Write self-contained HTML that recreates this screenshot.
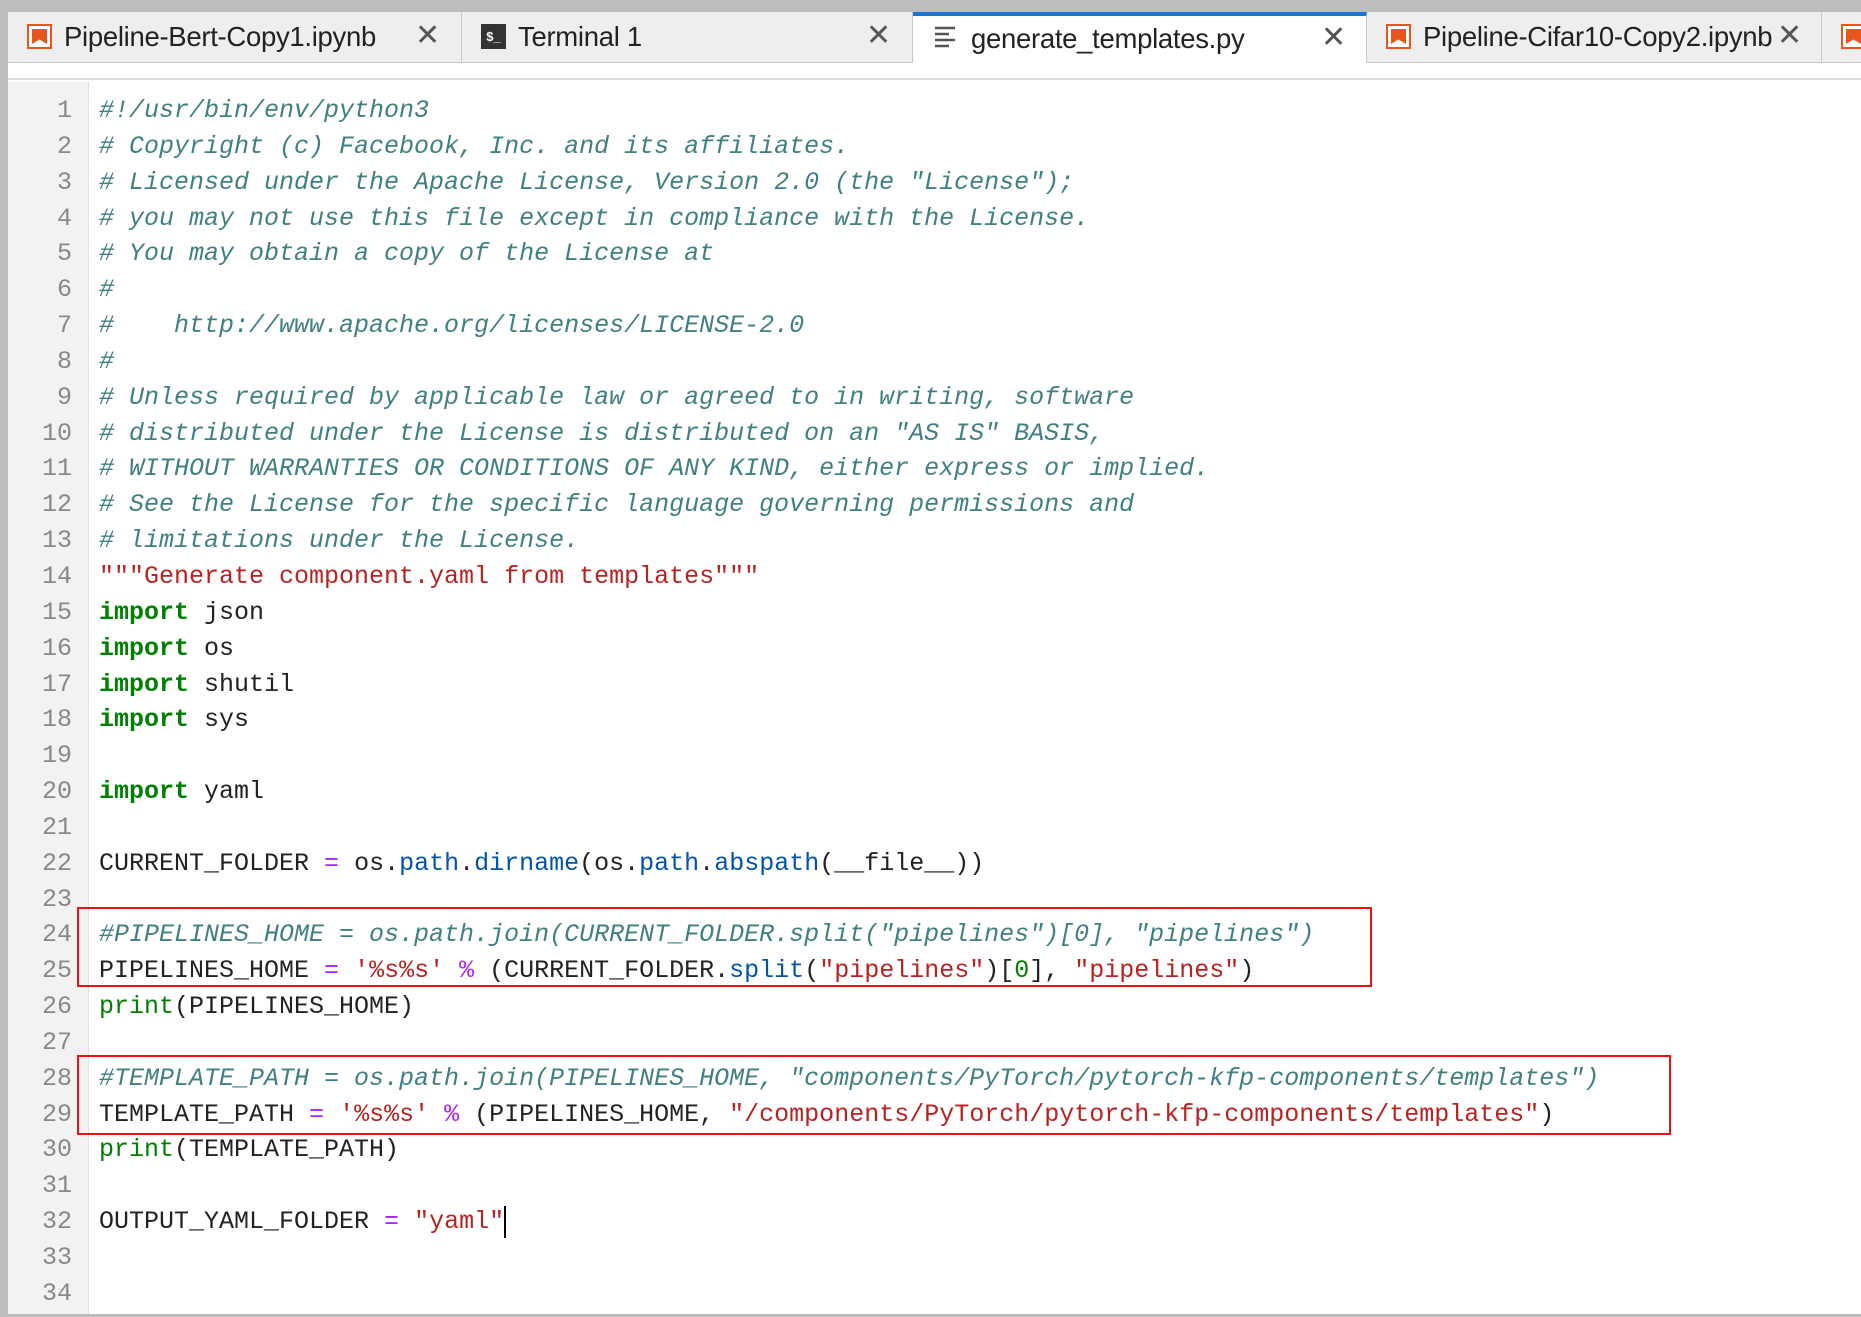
<!DOCTYPE html>
<html><head><meta charset="utf-8"><style>
*{margin:0;padding:0;box-sizing:border-box}
body{width:1861px;height:1317px;background:#fff;position:relative;overflow:hidden;font-family:"Liberation Sans",sans-serif}
.top{position:absolute;left:0;top:0;width:1861px;height:12px;background:#bdbdbd}
.lstrip{position:absolute;left:0;top:0;width:8px;height:1317px;background:#bdbdbd}
.bar{position:absolute;left:8px;top:12px;width:1853px;height:51px;background:#eeeeee;border-bottom:1px solid #c8c8c8}
.tab{position:absolute;top:12px;height:51px;background:#eeeeee;border-right:1px solid #c8c8c8;border-bottom:1px solid #c8c8c8;font-size:27.5px;color:#222;white-space:nowrap;overflow:hidden}
.tab .t{position:absolute;top:9px;left:56px;letter-spacing:-0.3px}
.tab .x{position:absolute;top:6px;font-size:30px;color:#555}
.nb{position:absolute;left:19px;top:12px;width:25px;height:25px;border:2px solid #e8561c;background:#fff}
.nb:after{content:"";position:absolute;left:3px;top:3px;width:15px;height:15px;background:#e8561c;clip-path:polygon(0 0,100% 0,100% 100%,50% 70%,0 100%)}
.term{position:absolute;left:19px;top:12px;width:25px;height:25px;background:#333;color:#fff;font-size:13px;font-weight:bold;line-height:25px;text-align:center}
.active{background:#fff;border-bottom:none;border-top:4px solid #1976d2;height:52px}
.strip{position:absolute;left:8px;top:63px;width:1853px;height:17px;background:#fff;border-bottom:2px solid #ddd}
.gut{position:absolute;left:8px;top:82px;width:81px;height:1233px;background:#f2f2f2;border-right:1px solid #e2e2e2}
.bot{position:absolute;left:0;top:1314px;width:1861px;height:3px;background:#bdbdbd}
.ln{position:absolute;left:8px;width:64px;text-align:right;color:#888;font-family:"Liberation Mono",monospace;font-size:25px}
.code{position:absolute;left:99px;top:93px;font-family:"Liberation Mono",monospace;font-size:25px;line-height:35.85px;white-space:pre;color:#222}
.c{color:#408080;font-style:italic}.k{color:#008000;font-weight:bold}.s{color:#ba2121}.o{color:#aa22ff}.f{color:#0055aa}.n{color:#008000}.b{color:#008000}
.box{position:absolute;border:2px solid #ee1111}
.cur{display:inline-block;width:2px;height:32px;background:#000;vertical-align:middle}
</style></head><body>
<div class="top"></div>
<div class="bar"></div>
<div class="tab" style="left:8px;width:454px"><div class="nb"></div><span class="t">Pipeline-Bert-Copy1.ipynb</span><span class="x" style="left:407px">✕</span></div>
<div class="tab" style="left:462px;width:451px"><div class="term">$_</div><span class="t">Terminal 1</span><span class="x" style="left:404px">✕</span></div>
<div class="tab active" style="left:913px;width:454px"><svg style="position:absolute;left:20px;top:9px" width="26" height="24"><g stroke="#555" stroke-width="2.5"><line x1="2" y1="3" x2="22" y2="3"/><line x1="2" y1="9" x2="16" y2="9"/><line x1="2" y1="15" x2="22" y2="15"/><line x1="2" y1="21" x2="16" y2="21"/></g></svg><span class="t" style="top:7px;left:58px">generate_templates.py</span><span class="x" style="left:408px;top:4px">✕</span></div>
<div class="tab" style="left:1367px;width:455px"><div class="nb"></div><span class="t" style="width:352px;overflow:hidden;display:block">Pipeline-Cifar10-Copy2.ipynb</span><span class="x" style="left:410px">✕</span></div>
<div class="tab" style="left:1822px;width:39px;border-right:none"><div class="nb"></div></div>
<div class="strip"></div>
<div class="gut"></div>
<div class="lstrip"></div>
<div class="bot"></div>
<div class="ln" style="top:93px;line-height:35.85px">1<br>2<br>3<br>4<br>5<br>6<br>7<br>8<br>9<br>10<br>11<br>12<br>13<br>14<br>15<br>16<br>17<br>18<br>19<br>20<br>21<br>22<br>23<br>24<br>25<br>26<br>27<br>28<br>29<br>30<br>31<br>32<br>33<br>34</div>
<div class="code"><span class="c">#!/usr/bin/env/python3</span>
<span class="c"># Copyright (c) Facebook, Inc. and its affiliates.</span>
<span class="c"># Licensed under the Apache License, Version 2.0 (the "License");</span>
<span class="c"># you may not use this file except in compliance with the License.</span>
<span class="c"># You may obtain a copy of the License at</span>
<span class="c">#</span>
<span class="c">#    http://www.apache.org/licenses/LICENSE-2.0</span>
<span class="c">#</span>
<span class="c"># Unless required by applicable law or agreed to in writing, software</span>
<span class="c"># distributed under the License is distributed on an "AS IS" BASIS,</span>
<span class="c"># WITHOUT WARRANTIES OR CONDITIONS OF ANY KIND, either express or implied.</span>
<span class="c"># See the License for the specific language governing permissions and</span>
<span class="c"># limitations under the License.</span>
<span class="s">"""Generate component.yaml from templates"""</span>
<span class="k">import</span> json
<span class="k">import</span> os
<span class="k">import</span> shutil
<span class="k">import</span> sys

<span class="k">import</span> yaml

CURRENT_FOLDER <span class="o">=</span> os.<span class="f">path</span>.<span class="f">dirname</span>(os.<span class="f">path</span>.<span class="f">abspath</span>(__file__))

<span class="c">#PIPELINES_HOME = os.path.join(CURRENT_FOLDER.split("pipelines")[0], "pipelines")</span>
PIPELINES_HOME <span class="o">=</span> <span class="s">'%s%s'</span> <span class="o">%</span> (CURRENT_FOLDER.<span class="f">split</span>(<span class="s">"pipelines"</span>)[<span class="n">0</span>], <span class="s">"pipelines"</span>)
<span class="b">print</span>(PIPELINES_HOME)

<span class="c">#TEMPLATE_PATH = os.path.join(PIPELINES_HOME, "components/PyTorch/pytorch-kfp-components/templates")</span>
TEMPLATE_PATH <span class="o">=</span> <span class="s">'%s%s'</span> <span class="o">%</span> (PIPELINES_HOME, <span class="s">"/components/PyTorch/pytorch-kfp-components/templates"</span>)
<span class="b">print</span>(TEMPLATE_PATH)

OUTPUT_YAML_FOLDER <span class="o">=</span> <span class="s">"yaml"</span><span class="cur"></span>

</div>
<div class="box" style="left:77px;top:907px;width:1295px;height:80px"></div>
<div class="box" style="left:77px;top:1055px;width:1594px;height:80px"></div>
</body></html>
